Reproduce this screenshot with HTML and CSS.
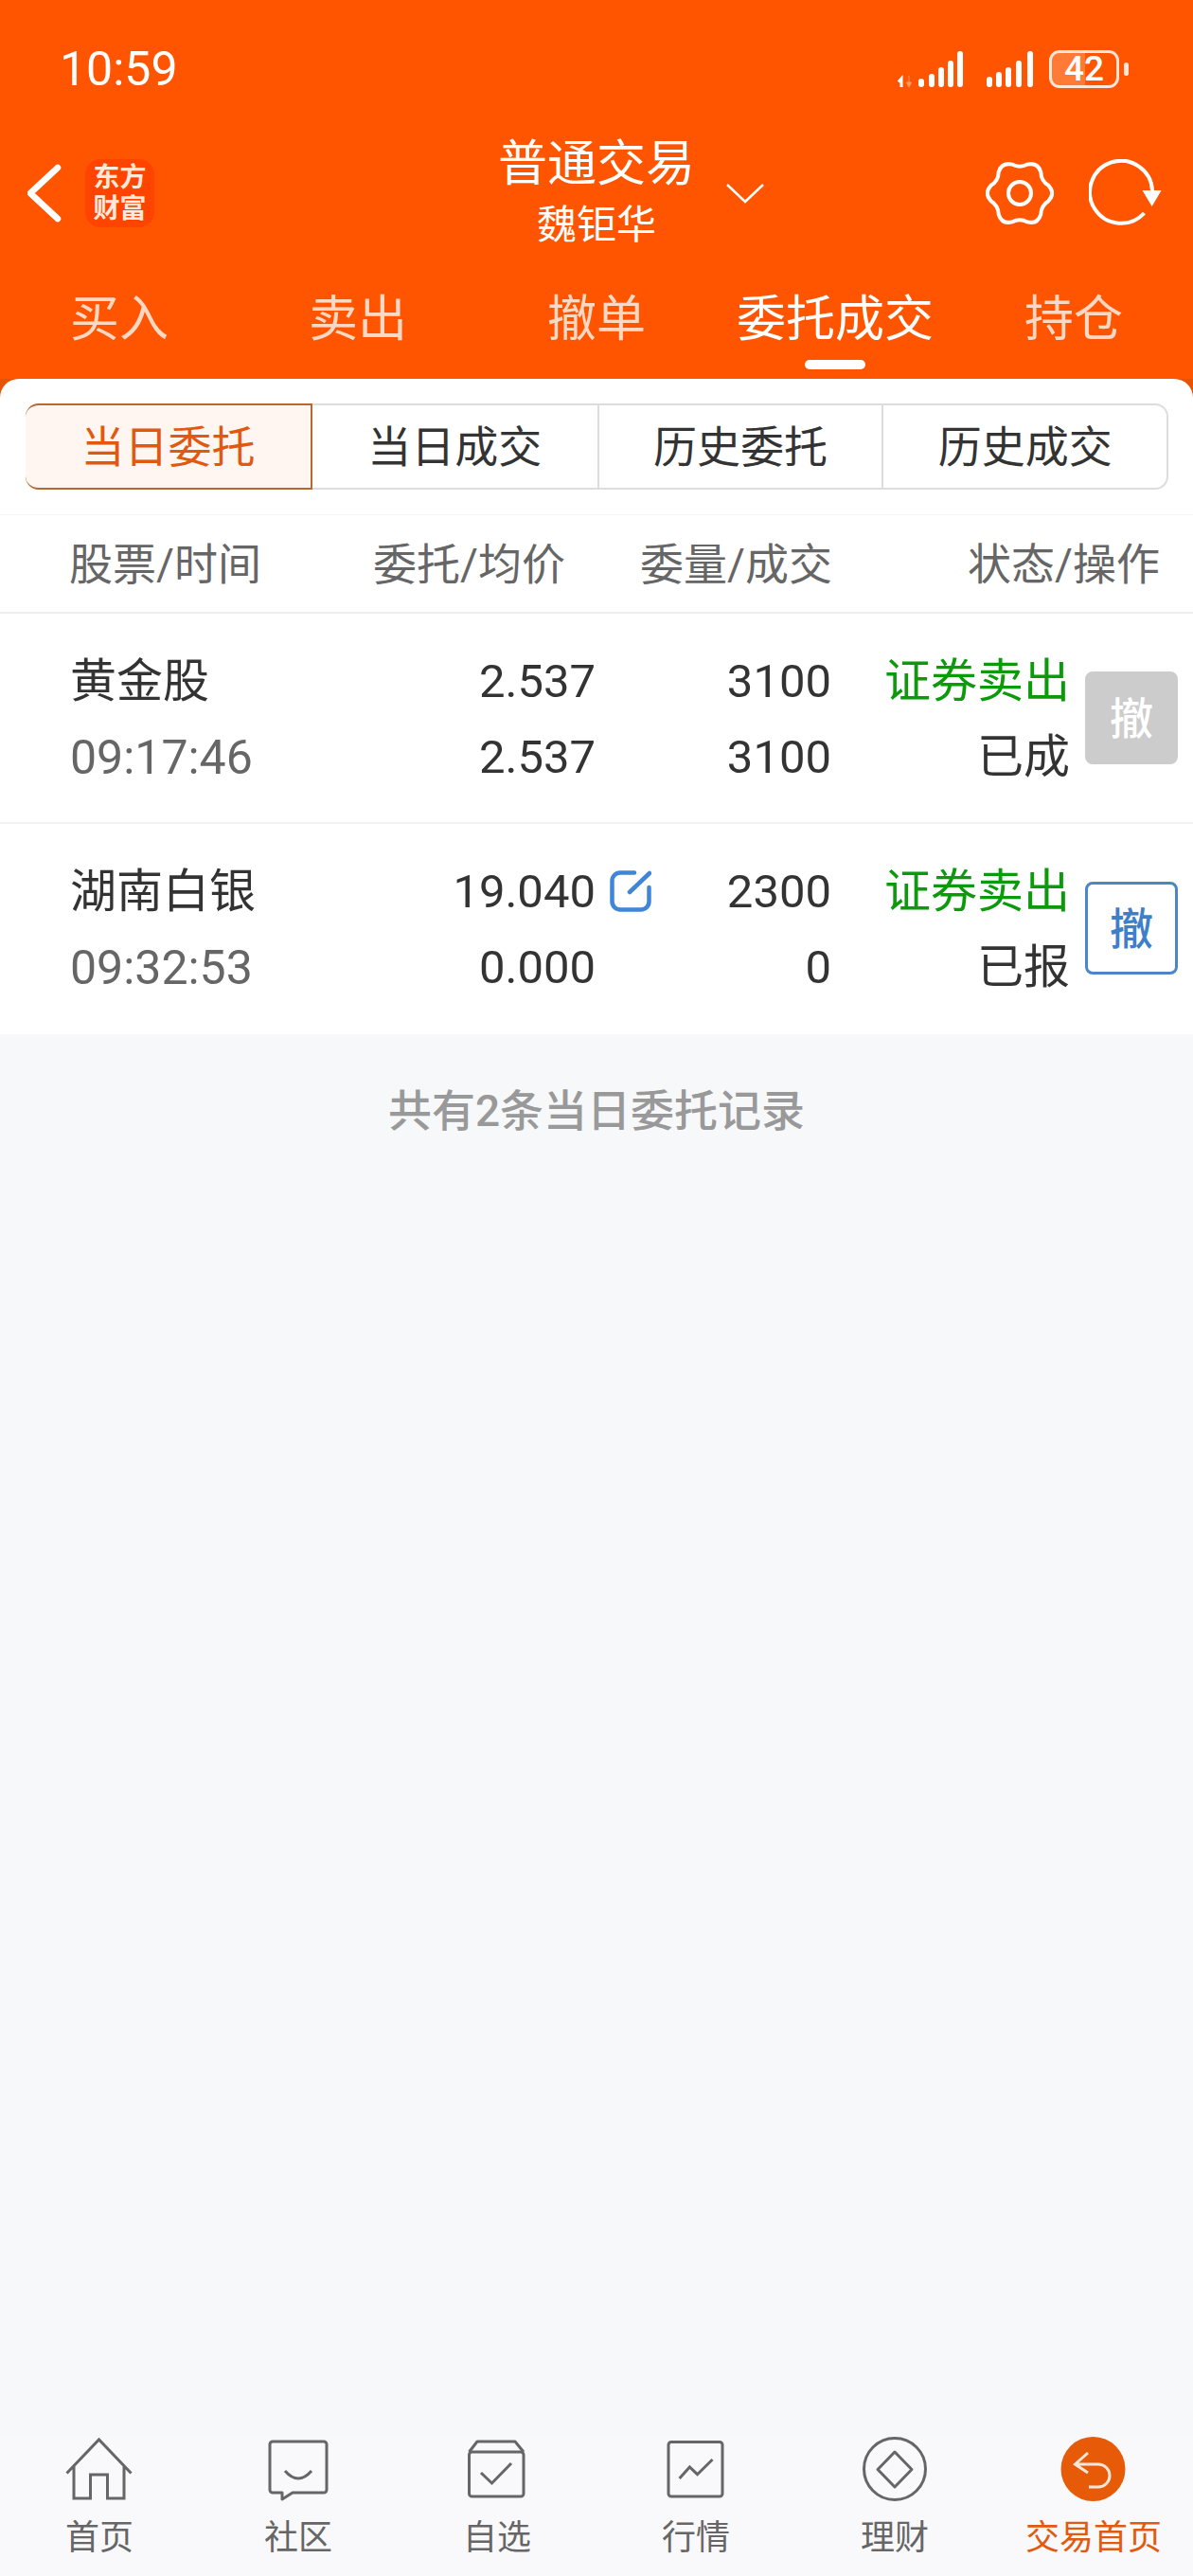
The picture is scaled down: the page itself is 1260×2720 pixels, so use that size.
FILE: index.html
```html
<!DOCTYPE html>
<html lang="zh-CN">
<head>
    <meta charset="UTF-8">
    <meta name="viewport" content="width=device-width, initial-scale=1.0">
    <title>普通交易</title>
    <link rel="stylesheet" href="styles.css">
</head>
<body>
    <div class="hero">
        <div class="status">
            <span class="clock">10:59</span>
            <div class="status-icons">
                <svg class="signal-a" width="70" height="40" viewBox="0 0 70 40">
                    <path d="M4 39V30L1 33.5M4 30" fill="none" stroke="#fff" stroke-width="3"/>
                    <path d="M12 27V34M9.5 34H14.5L12 39Z" fill="#ff9a66" stroke="#ff9a66" stroke-width="1"/>
                    <rect x="22" y="30" width="6" height="9" rx="3" fill="#fff"/>
                    <rect x="33" y="25" width="6" height="14" rx="3" fill="#fff"/>
                    <rect x="43" y="18" width="6" height="21" rx="3" fill="#fff"/>
                    <rect x="53" y="11" width="6" height="28" rx="3" fill="#fff"/>
                    <rect x="63" y="1" width="6" height="38" rx="3" fill="#fff"/>
                </svg>
                <svg class="signal-b" width="50" height="40" viewBox="0 0 50 40">
                    <rect x="0" y="28" width="6" height="11" rx="3" fill="#fff"/>
                    <rect x="10" y="23" width="6" height="16" rx="3" fill="#fff"/>
                    <rect x="20" y="18" width="6" height="21" rx="3" fill="#fff"/>
                    <rect x="31" y="11" width="6" height="28" rx="3" fill="#fff"/>
                    <rect x="43" y="1" width="6" height="38" rx="3" fill="#fff"/>
                </svg>
                <div class="battery">42</div>
                <span class="battery-nub"></span>
            </div>
        </div>

        <div class="head">
            <div class="head-left">
                <svg class="back" width="36" height="62" viewBox="0 0 36 62">
                    <path d="M32 4L3 31L32 58" fill="none" stroke="#fff" stroke-width="6.5" stroke-linecap="round" stroke-linejoin="round"/>
                </svg>
                <div class="logo">东方<br>财富</div>
            </div>
            <div class="head-title">
                <div class="title">普通交易</div>
                <div class="subtitle">魏钜华</div>
            </div>
            <div class="head-right">
                <svg class="arrow-down" width="40" height="22" viewBox="0 0 40 22">
                    <path d="M1 2L20 20L39 2" fill="none" stroke="#fff" stroke-width="2.5"/>
                </svg>
                <svg class="gear" width="72" height="70" viewBox="0 0 72 70">
                    <path d="M58.3 12.7Q58.5 22 66.4 26.8Q74 35 66.4 43.2Q58.5 48 58.3 57.3Q55 67.900 44.200 65.400Q36 61 27.800 65.400Q17 67.900 13.700 57.300Q13.500 48 5.600 43.200Q-2 35 5.600 26.800Q13.500 22 13.700 12.700Q17 2.100 27.800 4.600Q36 9 44.200 4.600Q55 2.100 58.300 12.700Z" fill="none" stroke="#fff" stroke-width="4" stroke-linejoin="round"/>
                    <circle cx="36" cy="35" r="12" fill="none" stroke="#fff" stroke-width="4"/>
                </svg>
                <svg class="refresh" width="78" height="72" viewBox="0 0 78 72">
                    <path d="M58.5 57A33 33 0 1 1 67 33" fill="none" stroke="#fff" stroke-width="4"/>
                    <path d="M56.5 33H76.6L66.6 50Z" fill="#fff"/>
                </svg>
            </div>
        </div>

        <div class="tabs">
            <div class="tab">买入</div>
            <div class="tab">卖出</div>
            <div class="tab">撤单</div>
            <div class="tab tab-active">委托成交</div>
            <div class="tab">持仓</div>
        </div>
    </div>

    <div class="panel-wrap">
        <div class="panel">
            <div class="seg-box">
                <div class="seg">
                    <div class="seg-item seg-active">当日委托</div>
                    <div class="seg-item">当日成交</div>
                    <div class="seg-item">历史委托</div>
                    <div class="seg-item">历史成交</div>
                </div>
            </div>

            <div class="list-head">
                <div>股票/时间</div>
                <div class="right">委托/均价</div>
                <div class="right">委量/成交</div>
                <div class="right">状态/操作</div>
            </div>

            <div class="row">
                <div class="name">黄金股</div>
                <div class="right">2.537</div>
                <div class="right">3100</div>
                <div class="right sell">证券卖出</div>
                <div class="cancel cancel-off">撤</div>
                <div class="time">09:17:46</div>
                <div class="right">2.537</div>
                <div class="right">3100</div>
                <div class="right">已成</div>
            </div>

            <div class="row row-last">
                <div class="name">湖南白银</div>
                <div class="right price">
                    19.040
                    <svg class="edit" width="44" height="44" viewBox="0 0 44 44">
                        <path d="M26 2.5H11A8.5 8.5 0 0 0 2.5 11V33A8.5 8.5 0 0 0 11 41.500H33A8.500 8.500 0 0 0 41.500 33V18" fill="none" stroke="#3f86d8" stroke-width="4.500" stroke-linecap="round"/>
                        <path d="M21 23L42 3" fill="none" stroke="#3f86d8" stroke-width="4.500" stroke-linecap="round"/>
                    </svg>
                </div>
                <div class="right">2300</div>
                <div class="right sell">证券卖出</div>
                <div class="cancel">撤</div>
                <div class="time">09:32:53</div>
                <div class="right">0.000</div>
                <div class="right">0</div>
                <div class="right">已报</div>
            </div>
        </div>
    </div>

    <div class="note">共有2条当日委托记录</div>

    <div class="tabbar">
        <div class="bar-item">
            <svg width="76" height="68" viewBox="0 0 76 68">
                <path d="M3.500 38.500L37.500 3L71.500 38.500M11 30V65H28.500V40H46.500V65H64V30" fill="none" stroke="#666" stroke-width="3"/>
            </svg>
            <span>首页</span>
        </div>
        <div class="bar-item">
            <svg width="76" height="68" viewBox="0 0 76 68">
                <path d="M11 5H65A3 3 0 0 1 68 8V56A3 3 0 0 1 65 59H32L21 66V59H11A3 3 0 0 1 8 56V8A3 3 0 0 1 11 5Z" fill="none" stroke="#666" stroke-width="3" stroke-linejoin="round"/>
                <path d="M24 36Q38 52 52 36" fill="none" stroke="#666" stroke-width="3"/>
            </svg>
            <span>社区</span>
        </div>
        <div class="bar-item">
            <svg width="76" height="68" viewBox="0 0 76 68">
                <path d="M8.500 16L17 5H57L66 16" fill="none" stroke="#666" stroke-width="3" stroke-linejoin="round"/>
                <rect x="8.500" y="16" width="57.500" height="47" rx="3" fill="none" stroke="#666" stroke-width="3"/>
                <path d="M21 38L32.500 49L53 28" fill="none" stroke="#666" stroke-width="3"/>
            </svg>
            <span>自选</span>
        </div>
        <div class="bar-item">
            <svg width="76" height="68" viewBox="0 0 76 68">
                <rect x="9" y="5.500" width="57" height="57.500" rx="3" fill="none" stroke="#666" stroke-width="3"/>
                <path d="M20.600 44L31.400 32L39.500 39.700L55.500 24" fill="none" stroke="#666" stroke-width="3"/>
            </svg>
            <span>行情</span>
        </div>
        <div class="bar-item">
            <svg width="76" height="68" viewBox="0 0 76 68">
                <circle cx="38" cy="34" r="32.500" fill="none" stroke="#666" stroke-width="3"/>
                <path d="M38 16L56 34.500L38 53L20 34.500Z" fill="none" stroke="#666" stroke-width="3" stroke-linejoin="round"/>
            </svg>
            <span>理财</span>
        </div>
        <div class="bar-item bar-active">
            <svg width="76" height="68" viewBox="0 0 76 68">
                <circle cx="37.500" cy="34" r="34" fill="#e65a08"/>
                <path d="M32 17L18.500 29L32 38M18.500 29H43A12 12 0 0 1 43 53H33" fill="none" stroke="#ffe6d8" stroke-width="3"/>
            </svg>
            <span>交易首页</span>
        </div>
    </div>
</body>
</html>
```

FILE: styles.css
```css
* {
    box-sizing: border-box;
}

body {
    font-family: Roboto, 'Noto Sans CJK SC', sans-serif;
    margin: 0;
    width: 1260px;
    min-height: 2720px;
    display: flex;
    flex-direction: column;
    background-color: #f7f8fa;
    color: #333;
}

.hero {
    height: 400px;
    background-color: #ff5500;
    color: #fff;
}

/* status bar */
.status {
    height: 147px;
    display: flex;
    justify-content: space-between;
    align-items: flex-start;
    padding: 52px 68px 0 63px;
}

.clock {
    font-size: 50px;
    line-height: 42px;
}

.status-icons {
    display: flex;
    align-items: flex-start;
    padding-top: 1px;
}

.signal-b {
    margin-left: 24px;
}

.battery {
    width: 74px;
    height: 40px;
    margin-left: 16px;
    border: 3px solid #ffe6d8;
    border-radius: 11px;
    background: linear-gradient(90deg, #ff7a35 52%, transparent 52%);
    font-size: 37px;
    font-weight: 500;
    line-height: 34px;
    text-align: center;
}

.battery-nub {
    width: 5px;
    height: 14px;
    margin: 13px 0 0 5px;
    border-radius: 3px;
    background-color: #ffe6d8;
}

/* header */
.head {
    display: grid;
    grid-template-columns: 1fr 210px 1fr;
    height: 114px;
    padding: 0 31px;
}

.head-left {
    display: flex;
    align-items: center;
    gap: 25px;
}

.back {
    margin-left: -2px;
}

.logo {
    width: 73px;
    height: 72px;
    padding-top: 3px;
    border-radius: 16px;
    background-color: #ff4400;
    color: #ffe9dd;
    font-size: 28px;
    font-weight: 700;
    line-height: 33px;
    text-align: center;
}

.head-title {
    text-align: center;
    white-space: nowrap;
}

.title {
    font-size: 52px;
    line-height: 54px;
}

.subtitle {
    margin-top: 14px;
    font-size: 42px;
    line-height: 46px;
}

.head-right {
    display: flex;
    align-items: center;
}

.arrow-down {
    margin-left: 32px;
}

.gear {
    margin-left: auto;
}

.refresh {
    margin: 0 1px 0 37px;
}

/* main tabs */
.tabs {
    display: flex;
}

.tab {
    position: relative;
    flex: 1;
    height: 139px;
    padding-top: 52px;
    color: #ffd8c4;
    font-size: 52px;
    line-height: 50px;
    text-align: center;
    white-space: nowrap;
}

.tab-active {
    color: #fff;
}

.tab-active::after {
    content: "";
    position: absolute;
    left: 50%;
    bottom: 10px;
    width: 64px;
    height: 10px;
    margin-left: -32px;
    border-radius: 5px;
    background-color: #fff;
}

/* white panel */
.panel-wrap {
    background-color: #e65400;
}

.panel {
    border-radius: 20px 20px 0 0;
    background-color: #fff;
}

.seg-box {
    padding: 26px 26px 26px 27px;
}

.seg {
    display: grid;
    grid-template-columns: repeat(4, 1fr);
    grid-template-rows: 87px;
    height: 91px;
    border: 2px solid #ddd;
    border-radius: 14px;
}

.seg-item {
    font-size: 46px;
    line-height: 89px;
    text-align: center;
    border-left: 2px solid #ddd;
}

.seg-item:first-child {
    border-left: none;
}

.seg-active {
    margin: -2px 0 -2px -2px;
    border: 2px solid #b8672f;
    border-radius: 14px 0 0 14px;
    background-color: #fff6f1;
    color: #e0590f;
}

.seg-active + .seg-item {
    border-left: none;
}

/* table */
.list-head {
    display: grid;
    grid-template-columns: 222px 302px 282px 346px;
    height: 105px;
    padding-left: 73px;
    border-top: 1px solid #f5f5f5;
    border-bottom: 2px solid #eee;
    color: #666;
    font-size: 46px;
    line-height: 104px;
    white-space: nowrap;
}

.right {
    text-align: right;
    white-space: nowrap;
}

.row {
    display: grid;
    grid-template-columns: 254px 301px 249px 252px 114px;
    grid-template-rows: 80px 80px;
    height: 222px;
    padding: 32px 0 0 74px;
    border-bottom: 2px solid #f3f3f3;
    font-size: 49px;
    line-height: 80px;
}

.row-last {
    border-bottom: none;
}

.name {
    white-space: nowrap;
}

.time {
    color: #666;
    font-size: 50px;
    white-space: nowrap;
}

.sell {
    color: #0a9a0a;
}

.price {
    position: relative;
}

.edit {
    position: absolute;
    right: -59px;
    top: 17px;
}

.cancel {
    grid-column: 5;
    grid-row: 1 / span 2;
    align-self: center;
    width: 98px;
    height: 98px;
    margin: 0 0 4px 16px;
    border: 3px solid #4a86c8;
    border-radius: 8px;
    color: #3f7fc8;
    font-size: 46px;
    font-weight: 500;
    line-height: 94px;
    text-align: center;
}

.cancel-off {
    border-color: #ccc;
    background-color: #ccc;
    color: #fff;
}

.note {
    margin-top: 51px;
    color: #999;
    font-size: 46px;
    font-weight: 500;
    line-height: 60px;
    text-align: center;
}

/* bottom bar */
.tabbar {
    display: grid;
    grid-template-columns: repeat(6, 1fr);
    margin-top: auto;
    padding-bottom: 20px;
    background-color: #f9f9fb;
}

.bar-item {
    display: flex;
    flex-direction: column;
    align-items: center;
    color: #666;
    font-size: 36px;
    line-height: 40px;
    white-space: nowrap;
}

.bar-item svg {
    display: block;
    margin-bottom: 19px;
}

.bar-active {
    color: #e05a10;
}
```
